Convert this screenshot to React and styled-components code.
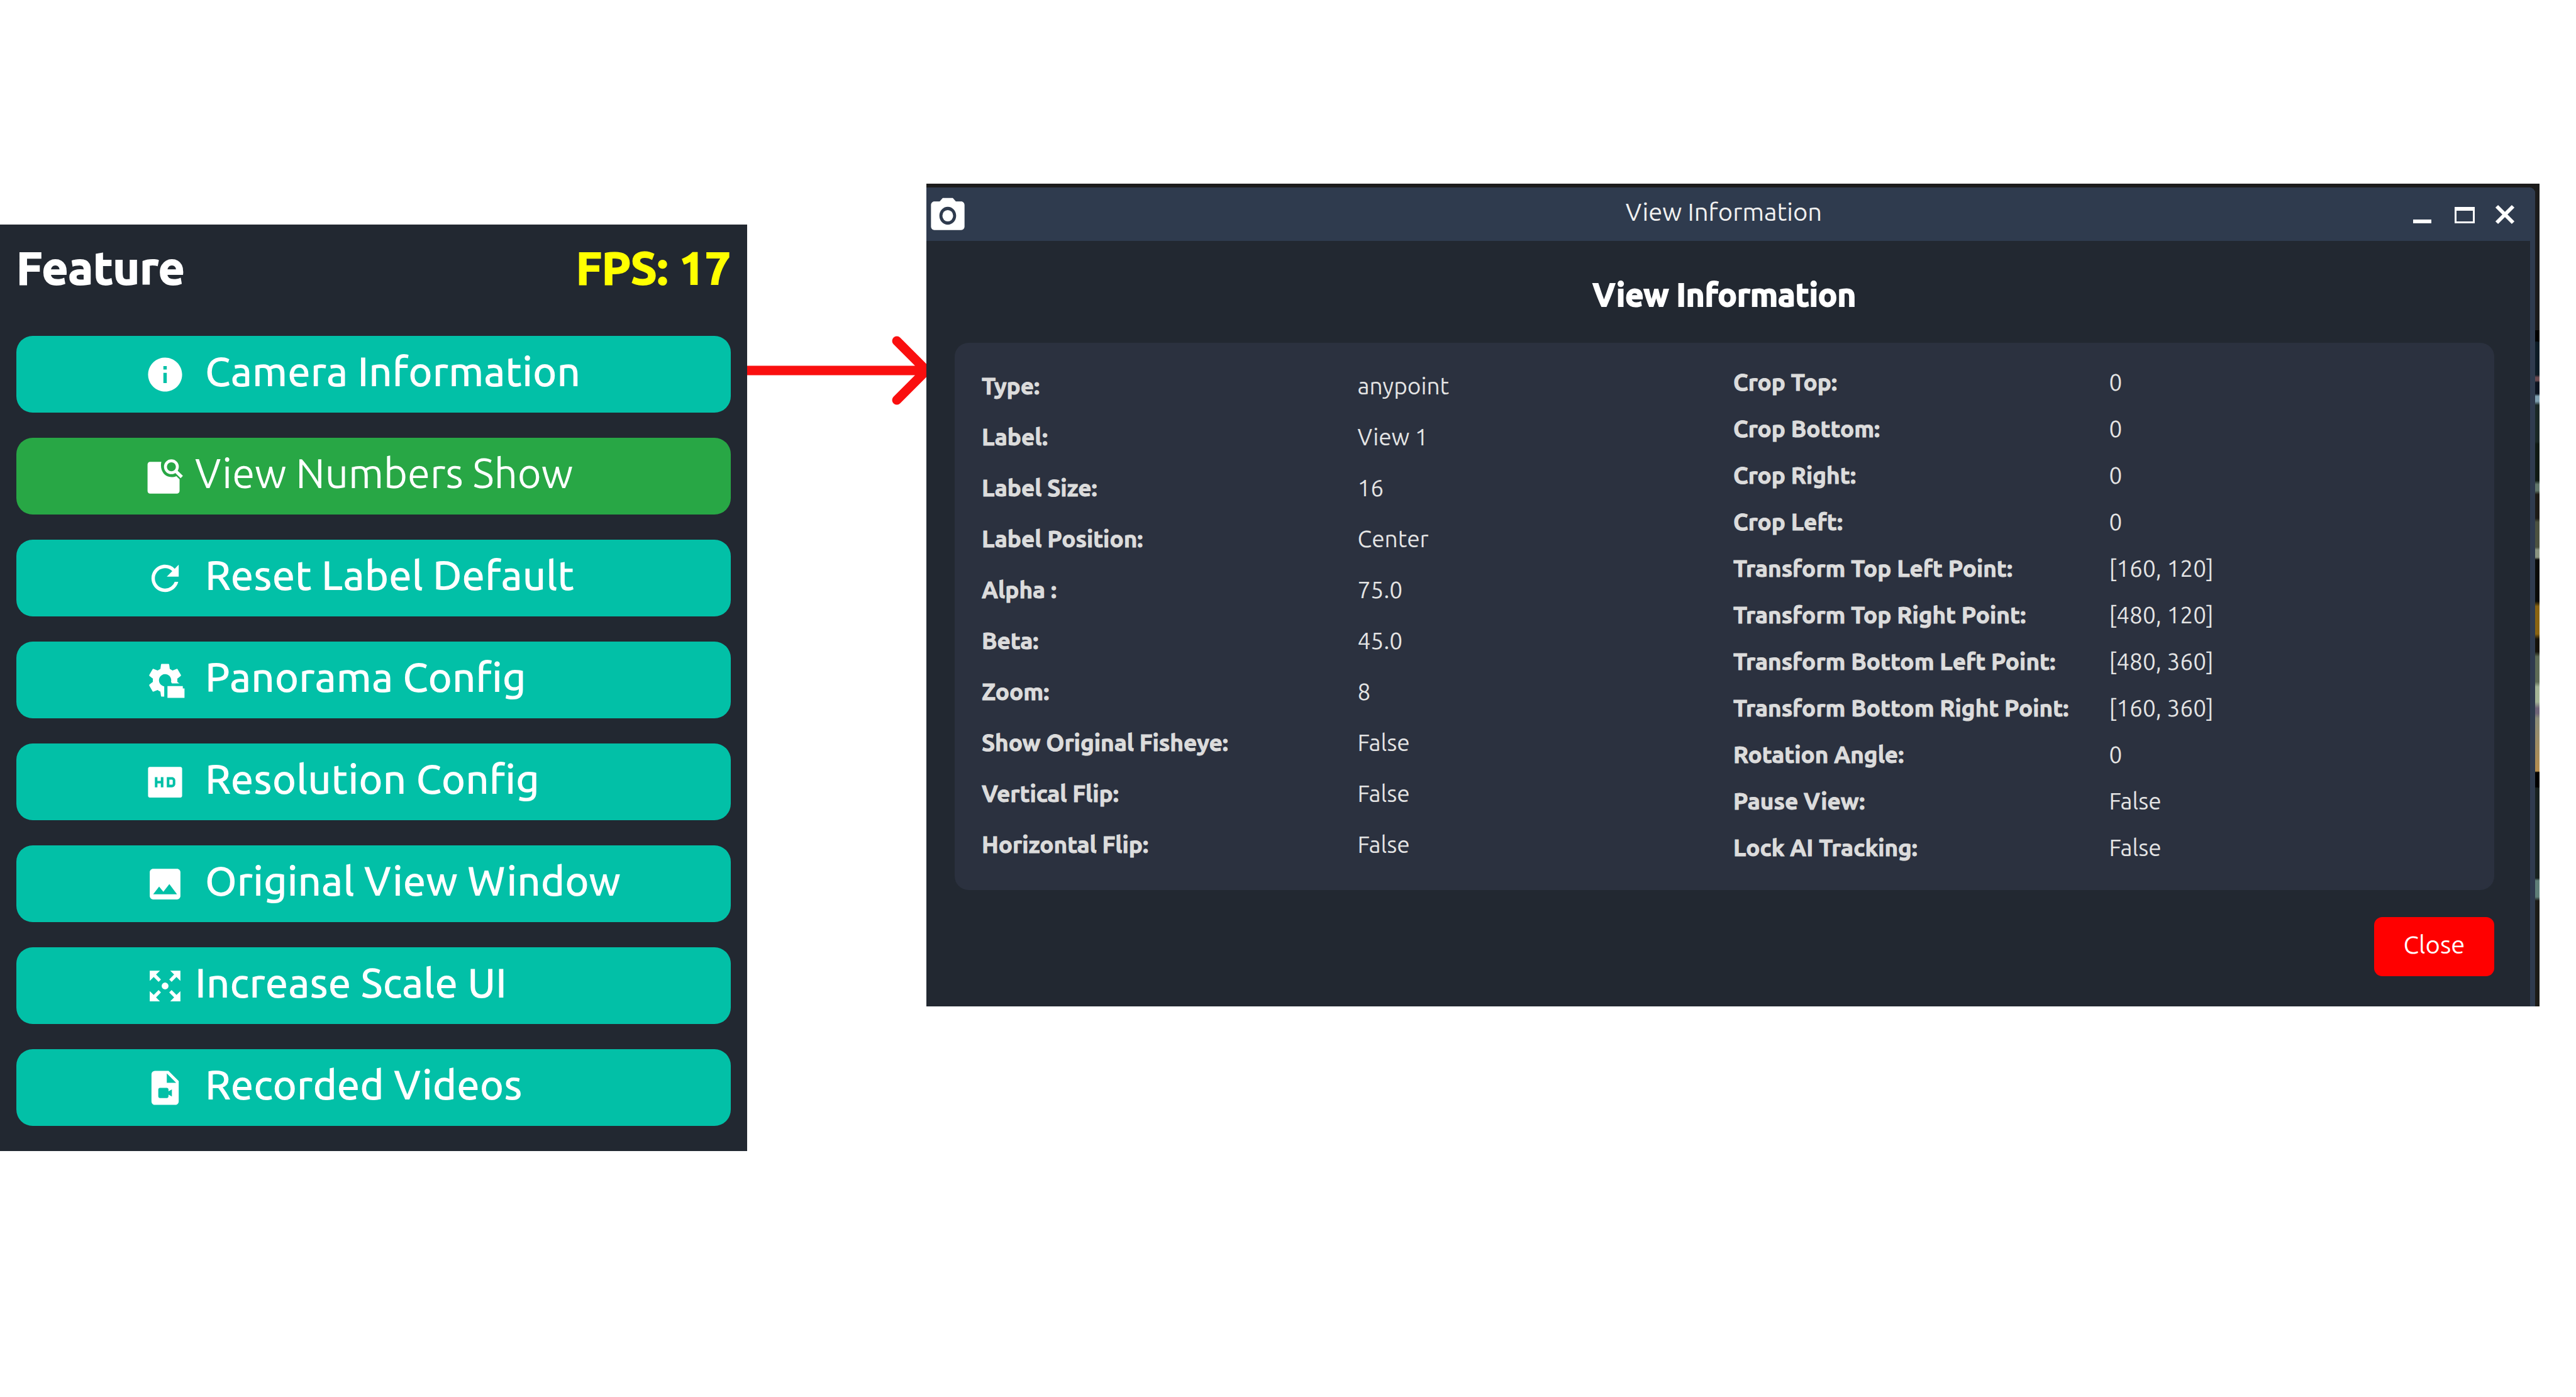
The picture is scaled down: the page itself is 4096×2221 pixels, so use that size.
import React from "react";
import styled, { createGlobalStyle } from "styled-components";
import { MdInfo, MdRefresh, MdImage, MdVideoFile, MdPhotoCamera } from "react-icons/md";
import { RiHdFill } from "react-icons/ri";

const GlobalStyle = createGlobalStyle`
  * { box-sizing: border-box; }
  body {
    margin: 0;
    background: #ffffff;
    font-family: "Ubuntu", "Noto Sans", "Open Sans", sans-serif;
  }
`;

const Page = styled.main`
  display: grid;
  grid-template-columns: 1188fr 285fr 2565fr 58fr;
  align-items: start;
  padding: 292px 0;
`;

/* ---------- feature panel ---------- */

const FeaturePanel = styled.section`
  display: flex;
  flex-direction: column;
  gap: 67px;
  margin-top: 65px;
  padding: 26px 26px 40px 26px;
  background: #222831;
`;

const PanelHeader = styled.header`
  display: flex;
  justify-content: space-between;
  font-size: 73px;
  font-weight: 700;
  line-height: 84px;
  -webkit-text-stroke: 2px currentColor;
`;

const PanelTitle = styled.h2`
  margin: 0;
  font: inherit;
  color: #ffffff;
`;

const Fps = styled.span`
  color: #ffff00;
`;

const ButtonList = styled.div`
  display: flex;
  flex-direction: column;
  gap: 40px;
`;

const FeatureButton = styled.button`
  display: flex;
  align-items: center;
  gap: ${(p) => (p.$tight ? 15 : 31)}px;
  height: 122px;
  padding: 0 0 0 204px;
  border: 0;
  border-radius: 26px;
  background: ${(p) => (p.$active ? "#28a745" : "#02c0a7")};
  color: #ffffff;
  font-family: inherit;
  font-size: 65px;
  font-weight: ${(p) => (p.$active ? 400 : 500)};
  line-height: 76px;
  white-space: nowrap;
  cursor: pointer;

  svg {
    flex: none;
    width: 65px;
    height: 65px;
  }
`;

const ButtonLabel = styled.span`
  padding-bottom: 10px;
`;

/* ---------- arrow ---------- */

const Arrow = styled.svg`
  display: block;
  width: 100%;
  margin-top: 242px;
  fill: none;
  stroke: #fa0f0f;
  stroke-width: 15;
  stroke-linecap: round;
  stroke-linejoin: round;
`;

/* ---------- dialog window ---------- */

const Desktop = styled.div`
  padding: 6px 7px 0 0;
  background:
    linear-gradient(#1c1c1c, #1c1c1c) top / 100% 6px no-repeat,
    linear-gradient(
      #1c1c1c 0 233px, #000000 233px 250px, #0d1c26 252px 304px, #6b4a50 308px 313px,
      #0c1420 316px 334px, #7fa0b0 338px 346px, #1a2826 352px 410px, #101a14 414px 472px,
      #61766a 478px 488px, #1d1b16 494px 532px, #4c5240 538px 578px, #8a9480 582px 594px,
      #0a0b08 598px 664px, #8a6412 672px 716px, #15120a 724px 744px, #5e6c56 752px 792px,
      #a3b496 800px 824px, #6f6478 834px 842px, #8a8c78 850px, #b48c4e 934px, #000000 936px 959px,
      #182220 961px 1104px, #5f7f78 1108px 1134px, #1c1c18 1140px
    );
`;

const Dialog = styled.section`
  background: #222831;
  border-right: 8px solid #2f3b4e;
  border-top-right-radius: 9px;
`;

const TitleBar = styled.header`
  display: grid;
  grid-template-columns: 1fr auto 1fr;
  align-items: center;
  height: 85px;
  margin-right: -8px;
  padding: 0 24px 0 2px;
  border-top-right-radius: 9px;
  background: #2f3b4e;
  color: #ffffff;
`;

const AppIcon = styled(MdPhotoCamera)`
  width: 64px;
  height: 68px;
  margin-top: 4px;
`;

const TitleText = styled.span`
  padding-bottom: 8px;
  color: #f0f0f0;
  font-size: 40px;
  line-height: 46px;
`;

const WindowControls = styled.div`
  display: flex;
  justify-content: flex-end;
  gap: 18px;
`;

const ControlButton = styled.button`
  width: 48px;
  height: 48px;
  padding: 0;
  border: 0;
  background: none;
  cursor: pointer;

  svg {
    display: block;
    width: 48px;
    height: 48px;
    fill: none;
    stroke: #ffffff;
  }
`;

const DialogBody = styled.div`
  display: flex;
  flex-direction: column;
  padding: 55px 57px 48px 45px;
`;

const Heading = styled.h1`
  margin: 0 0 47px;
  color: #ffffff;
  font-size: 51px;
  font-weight: 700;
  line-height: 60px;
  text-align: center;
  -webkit-text-stroke: 2px currentColor;
`;

const Card = styled.div`
  display: grid;
  grid-template-columns: 1fr 1fr;
  align-items: center;
  gap: 26px;
  padding: 26px 41px 30px 43px;
  border-radius: 22px;
  background: #2b313f;
`;

const Details = styled.dl`
  display: grid;
  grid-template-columns: 1fr 1fr;
  grid-auto-rows: ${(p) => p.$row}px;
  align-items: center;
  column-gap: 26px;
  margin: 0;
  font-size: 37px;
  line-height: 42px;
  white-space: nowrap;
`;

const Term = styled.dt`
  color: #dcdcdc;
  font-weight: 700;
  -webkit-text-stroke: 1px currentColor;
`;

const Value = styled.dd`
  margin: 0;
  color: #e4e4e4;
`;

const CloseButton = styled.button`
  align-self: flex-end;
  width: 191px;
  height: 94px;
  margin-top: 43px;
  padding: 0 0 6px;
  border: 0;
  border-radius: 13px;
  background: #ff0000;
  color: #ffffff;
  font-family: inherit;
  font-size: 40px;
  line-height: 46px;
  cursor: pointer;
`;

/* ---------- drawn icons ---------- */

const PageSearchIcon = () => (
  <svg viewBox="0 0 24 24" aria-hidden="true">
    <path
      fill="currentColor"
      d="M3.200 3.400h6.600c-1 4.600 1.400 8.900 6 9 1 0 2-.2 2.800-.6l1.900 1.900v6.800c0 .9-.7 1.600-1.600 1.600H3.200c-.9 0-1.500-.7-1.500-1.600V5c0-.9.6-1.600 1.500-1.600z"
    />
    <circle cx="15.700" cy="6.300" r="3.500" fill="none" stroke="currentColor" strokeWidth="1.700" />
    <path d="M18.200 8.800l3.600 3.500" stroke="currentColor" strokeWidth="1.900" />
  </svg>
);

const GearBoxIcon = () => (
  <svg viewBox="0 0 24 24" aria-hidden="true">
    <mask id="gear-cut">
      <rect width="24" height="24" fill="#fff" />
      <path d="M11.500 24V12h3.500l1 1.800h8V24z" fill="#000" />
    </mask>
    <path
      mask="url(#gear-cut)"
      fill="currentColor"
      d="M19.140 12.940c.04-.3.06-.61.06-.94 0-.32-.02-.64-.07-.94l2.030-1.580c.18-.14.23-.41.12-.61l-1.920-3.320c-.12-.22-.37-.29-.59-.22l-2.390.96c-.5-.38-1.030-.7-1.620-.94l-.36-2.540c-.04-.24-.24-.41-.48-.41h-3.840c-.24 0-.43.17-.47.41l-.36 2.540c-.59.24-1.130.57-1.620.94l-2.390-.96c-.22-.08-.47 0-.59.22L2.740 8.870c-.12.21-.08.47.12.61l2.030 1.580c-.05.3-.09.63-.09.94s.02.64.07.94l-2.030 1.580c-.18.14-.23.41-.12.61l1.920 3.320c.12.22.37.29.59.22l2.390-.96c.5.38 1.030.7 1.620.94l.36 2.540c.05.24.24.41.48.41h3.840c.24 0 .44-.17.47-.41l.36-2.540c.59-.24 1.130-.56 1.620-.94l2.390.96c.22.08.47 0 .59-.22l1.920-3.320c.12-.22.07-.47-.12-.61l-2.010-1.580zM12 15.600c-1.980 0-3.600-1.620-3.600-3.600s1.620-3.600 3.600-3.600 3.600 1.620 3.600 3.600-1.620 3.600-3.600 3.600z"
    />
    <path d="M13.400 22.300v-6.900h9v1.400h1v5.500z" fill="currentColor" />
  </svg>
);

const ExpandIcon = () => (
  <svg viewBox="0 0 24 24" aria-hidden="true">
    <path
      fill="currentColor"
      d="M15 3l2.300 2.300-2.890 2.870 1.420 1.420L18.700 6.700 21 9V3zM3 9l2.300-2.300 2.870 2.890 1.420-1.420L6.700 5.300 9 3H3zm6 12l-2.300-2.300 2.890-2.870-1.420-1.420L5.300 17.300 3 15v6zm12-6l-2.300 2.300-2.870-2.890-1.420 1.420 2.890 2.870L15 21h6z"
    />
    <circle cx="12" cy="12" r="2" fill="currentColor" />
  </svg>
);

/* ---------- data ---------- */

const features = [
  { label: "Camera Information", icon: MdInfo },
  { label: "View Numbers Show", icon: PageSearchIcon, active: true, tight: true },
  { label: "Reset Label Default", icon: MdRefresh },
  { label: "Panorama Config", icon: GearBoxIcon },
  { label: "Resolution Config", icon: RiHdFill },
  { label: "Original View Window", icon: MdImage },
  { label: "Increase Scale UI", icon: ExpandIcon, tight: true },
  { label: "Recorded Videos", icon: MdVideoFile },
];

const viewDetails = [
  ["Type:", "anypoint"],
  ["Label:", "View 1"],
  ["Label Size:", "16"],
  ["Label Position:", "Center"],
  ["Alpha :", "75.0"],
  ["Beta:", "45.0"],
  ["Zoom:", "8"],
  ["Show Original Fisheye:", "False"],
  ["Vertical Flip:", "False"],
  ["Horizontal Flip:", "False"],
];

const transformDetails = [
  ["Crop Top:", "0"],
  ["Crop Bottom:", "0"],
  ["Crop Right:", "0"],
  ["Crop Left:", "0"],
  ["Transform Top Left Point:", "[160, 120]"],
  ["Transform Top Right Point:", "[480, 120]"],
  ["Transform Bottom Left Point:", "[480, 360]"],
  ["Transform Bottom Right Point:", "[160, 360]"],
  ["Rotation Angle:", "0"],
  ["Pause View:", "False"],
  ["Lock AI Tracking:", "False"],
];

const DetailList = ({ items, row }) => (
  <Details $row={row}>
    {items.map(([term, value]) => (
      <React.Fragment key={term}>
        <Term>{term}</Term>
        <Value>{value}</Value>
      </React.Fragment>
    ))}
  </Details>
);

export default function App() {
  return (
    <>
      <GlobalStyle />
      <Page>
        <FeaturePanel>
          <PanelHeader>
            <PanelTitle>Feature</PanelTitle>
            <Fps>FPS: 17</Fps>
          </PanelHeader>
          <ButtonList>
            {features.map(({ label, icon: Icon, active, tight }) => (
              <FeatureButton key={label} type="button" $active={active} $tight={tight}>
                <Icon />
                <ButtonLabel>{label}</ButtonLabel>
              </FeatureButton>
            ))}
          </ButtonList>
        </FeaturePanel>

        <Arrow viewBox="0 0 285 110" aria-hidden="true">
          <path d="M-10 55H285M238 8L285 55L238 102" />
        </Arrow>

        <Desktop>
          <Dialog>
            <TitleBar>
              <AppIcon preserveAspectRatio="none" />
              <TitleText>View Information</TitleText>
              <WindowControls>
                <ControlButton type="button" aria-label="Minimize">
                  <svg viewBox="0 0 48 48"><path d="M10 35H39" strokeWidth="6" /></svg>
                </ControlButton>
                <ControlButton type="button" aria-label="Maximize">
                  <svg viewBox="0 0 48 48">
                    <path d="M10 15H42" strokeWidth="6" />
                    <path d="M11.500 14V36.500H40.500V14" strokeWidth="3" />
                  </svg>
                </ControlButton>
                <ControlButton type="button" aria-label="Close window">
                  <svg viewBox="0 0 48 48"><path d="M11 11L37 37M37 11L11 37" strokeWidth="6" /></svg>
                </ControlButton>
              </WindowControls>
            </TitleBar>
            <DialogBody>
              <Heading>View Information</Heading>
              <Card>
                <DetailList items={viewDetails} row={81} />
                <DetailList items={transformDetails} row={74} />
              </Card>
              <CloseButton type="button">Close</CloseButton>
            </DialogBody>
          </Dialog>
        </Desktop>
      </Page>
    </>
  );
}
